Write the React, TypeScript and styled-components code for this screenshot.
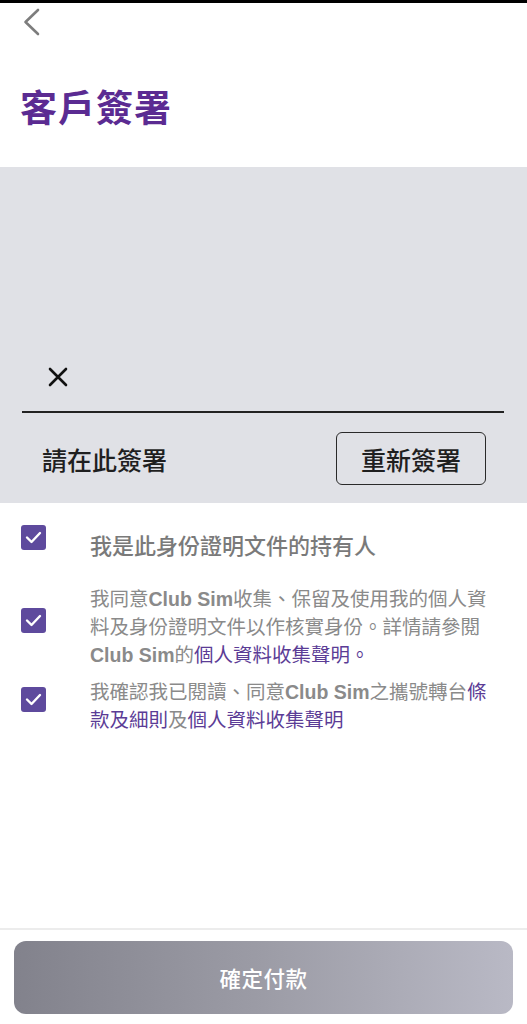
import React from "react";
import styled, { createGlobalStyle } from "styled-components";

const GlobalStyle = createGlobalStyle`
  html, body { margin: 0; padding: 0; background: #ffffff; }
  body { font-family: "Noto Sans CJK TC", "Noto Sans", sans-serif; }
  * { box-sizing: border-box; }
`;

const Screen = styled.div`
  width: 527px;
  height: 1024px;
  display: flex;
  flex-direction: column;
  border-top: 3px solid #000;
  background: #fff;
`;

const Header = styled.header`
  height: 164px;
  display: flex;
  flex-direction: column;
  padding: 4px 20px 0;
`;

const BackButton = styled.button`
  width: 30px;
  height: 30px;
  padding: 0 0 0 2px;
  margin: 0;
  border: none;
  background: transparent;
  display: flex;
  align-items: center;
  justify-content: flex-start;
`;

const Title = styled.h1`
  margin: 47px 0 0;
  font-size: 37px;
  line-height: 44px;
  font-weight: 700;
  color: #5b2b92;
  letter-spacing: 1px;
`;

const SignPad = styled.section`
  height: 336px;
  background: #e0e1e6;
  display: flex;
  flex-direction: column;
  justify-content: flex-end;
  padding: 0 23px 18px 22px;
`;

const CrossMark = styled.div`
  margin-left: 26px;
  width: 20px;
  height: 20px;
  display: flex;
`;

const SignLine = styled.div`
  margin-top: 24px;
  height: 2px;
  background: #222;
`;

const PadFooter = styled.div`
  margin-top: 19px;
  height: 53px;
  display: flex;
  align-items: center;
  justify-content: space-between;
  padding: 0 18px 0 20px;
`;

const Hint = styled.span`
  font-size: 25px;
  font-weight: 500;
  color: #1f1f1f;
`;

const ResignButton = styled.button`
  width: 150px;
  height: 53px;
  border: 1.5px solid #2a2a2a;
  border-radius: 6px;
  background: transparent;
  font-family: inherit;
  font-size: 25px;
  font-weight: 500;
  color: #1f1f1f;
  padding: 0;
`;

const Checklist = styled.div`
  flex: 1;
  display: flex;
  flex-direction: column;
  padding: 22px 22px 0 21px;
`;

const Row = styled.label<{ $top: number }>`
  display: flex;
  align-items: center;
  gap: 44px;
  margin-top: ${(p) => p.$top}px;
`;

const Box = styled.span`
  flex: none;
  width: 25px;
  height: 25px;
  margin-bottom: 12px;
  border-radius: 3px;
  background: #5e4a9d;
  display: flex;
  align-items: center;
  justify-content: center;
`;

const Text = styled.span<{ $lead?: boolean }>`
  flex: 1;
  font-size: ${(p) => (p.$lead ? "22px" : "19.5px")};
  line-height: ${(p) => (p.$lead ? "30px" : "28px")};
  font-weight: ${(p) => (p.$lead ? 500 : 400)};
  color: ${(p) => (p.$lead ? "#7a7a7a" : "#8a8a8a")};
  padding-right: 5px;
`;

const Brand = styled.b`
  font-family: "Liberation Sans", Arial, sans-serif;
  font-weight: 700;
  line-height: 1;
`;

const Link = styled.span`
  color: #5b3c96;
`;

const BottomBar = styled.footer`
  border-top: 2px solid #ececec;
  padding: 11px 14px 10px;
`;

const PayButton = styled.button`
  width: 100%;
  height: 73px;
  border: none;
  border-radius: 12px;
  background: linear-gradient(90deg, #82828c 0%, #9c9ca6 50%, #b9b9c5 100%);
  color: #fff;
  font-family: inherit;
  font-size: 21.5px;
  font-weight: 500;
  letter-spacing: 0.5px;
`;

const Check = () => (
  <svg width="17" height="13" viewBox="0 0 17 13">
    <path d="M2 6.5 L6.5 11 L15 2" fill="none" stroke="#fff" strokeWidth="2.4" strokeLinecap="round" strokeLinejoin="round" />
  </svg>
);

export default function App() {
  return (
    <>
      <GlobalStyle />
      <Screen>
        <Header>
          <BackButton aria-label="back">
            <svg width="20" height="28" viewBox="0 0 20 28">
              <path d="M16 2 L3.5 14 L16 26" fill="none" stroke="#7d7d7d" strokeWidth="2.6" strokeLinecap="round" strokeLinejoin="round" />
            </svg>
          </BackButton>
          <Title>客戶簽署</Title>
        </Header>
        <SignPad>
          <CrossMark>
            <svg width="20" height="20" viewBox="0 0 20 20">
              <path d="M2 2 L18 18 M18 2 L2 18" stroke="#111" strokeWidth="2.6" strokeLinecap="round" />
            </svg>
          </CrossMark>
          <SignLine />
          <PadFooter>
            <Hint>請在此簽署</Hint>
            <ResignButton>重新簽署</ResignButton>
          </PadFooter>
        </SignPad>
        <Checklist>
          <Row $top={0}>
            <Box><Check /></Box>
            <Text $lead>我是此身份證明文件的持有人</Text>
          </Row>
          <Row $top={22}>
            <Box><Check /></Box>
            <Text>
              我同意<Brand>Club Sim</Brand>收集、保留及使用我的個人資料及身份證明文件以作核實身份。詳情請參閱<Brand>Club Sim</Brand>的<Link>個人資料收集聲明。</Link>
            </Text>
          </Row>
          <Row $top={9}>
            <Box><Check /></Box>
            <Text>
              我確認我已閱讀、同意<Brand>Club Sim</Brand>之攜號轉台<Link>條款及細則</Link>及<Link>個人資料收集聲明</Link>
            </Text>
          </Row>
        </Checklist>
        <BottomBar>
          <PayButton>確定付款</PayButton>
        </BottomBar>
      </Screen>
    </>
  );
}
